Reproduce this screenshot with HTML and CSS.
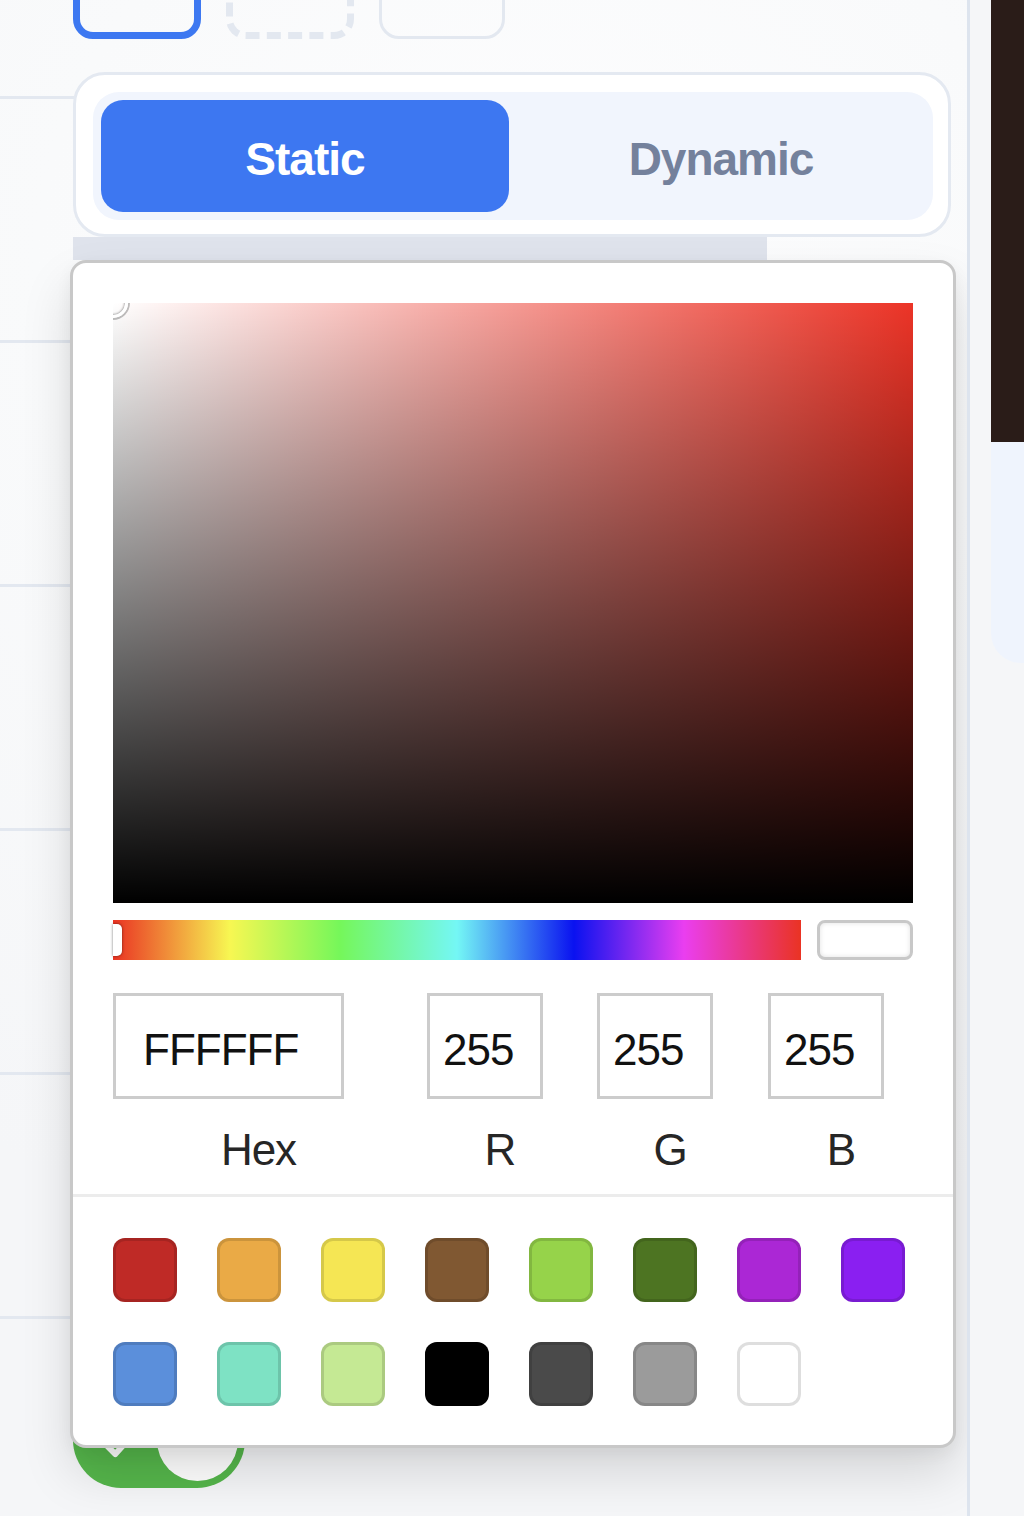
FILE: index.html
```html
<!DOCTYPE html>
<html lang="en">
<head>
<meta charset="utf-8">
<title>Color picker</title>
<link rel="stylesheet" href="styles.css">
</head>
<body>
<div class="app">
  <main class="main">
    <div class="list">
      <div class="row"></div>
      <div class="row"></div>
      <div class="row"></div>
      <div class="row"></div>
      <div class="row"></div>
      <div class="row">
        <div class="toggle">
          <svg class="toggle-check" width="44" height="44" viewBox="0 0 24 24"><path d="M5 12.5l5 5 9-10" fill="none" stroke="#fff" stroke-width="3.2" stroke-linecap="round" stroke-linejoin="round"/></svg>
          <span class="toggle-knob"></span>
        </div>
      </div>
    </div>

    <div class="panel">
      <div class="styles">
        <div class="style-box solid"></div>
        <div class="style-box dashed"></div>
        <div class="style-box plain"></div>
      </div>

      <div class="segment">
        <div class="segment-track">
          <div class="seg active">Static</div>
          <div class="seg">Dynamic</div>
        </div>
      </div>

      <div class="strip"></div>

      <div class="picker">
        <div class="picker-top">
          <div class="saturation">
            <span class="sat-handle"></span>
          </div>
          <div class="hue-row">
            <div class="hue"><span class="hue-handle"></span></div>
            <div class="preview"></div>
          </div>
          <div class="fields">
            <div class="field hex">
              <div class="field-input">FFFFFF</div>
              <div class="field-label">Hex</div>
            </div>
            <div class="field rgb r">
              <div class="field-input">255</div>
              <div class="field-label">R</div>
            </div>
            <div class="field rgb g">
              <div class="field-input">255</div>
              <div class="field-label">G</div>
            </div>
            <div class="field rgb b">
              <div class="field-input">255</div>
              <div class="field-label">B</div>
            </div>
          </div>
        </div>
        <div class="presets">
          <span class="swatch c-red"></span>
          <span class="swatch c-orange"></span>
          <span class="swatch c-yellow"></span>
          <span class="swatch c-brown"></span>
          <span class="swatch c-green"></span>
          <span class="swatch c-darkgreen"></span>
          <span class="swatch c-purple"></span>
          <span class="swatch c-violet"></span>
          <span class="swatch c-blue"></span>
          <span class="swatch c-teal"></span>
          <span class="swatch c-lime"></span>
          <span class="swatch c-black"></span>
          <span class="swatch c-dark"></span>
          <span class="swatch c-gray"></span>
          <span class="swatch c-white"></span>
        </div>
      </div>
    </div>
  </main>
  <aside class="side">
    <div class="side-dark"></div>
    <div class="side-card"></div>
  </aside>
</div>
</body>
</html>
```

FILE: styles.css
```css
* { box-sizing: border-box; }

html, body {
  margin: 0;
  padding: 0;
}

body {
  background: #f5f6f8;
  font-family: "Liberation Sans", Arial, sans-serif;
  width: 1024px;
  height: 1516px;
  overflow: hidden;
}

.app {
  display: flex;
  height: 1516px;
}

.main {
  position: relative;
  width: 970px;
  height: 1516px;
  border-right: 3px solid #dde4ee;
  background: radial-gradient(1100px 1000px at 55% 18%, #fdfdfe 0%, #f9fafb 45%, #f5f6f8 100%);
  overflow: hidden;
}

/* background list */
.list {
  padding-top: 96px;
}

.row {
  width: 80px;
  height: 244px;
  border-top: 3px solid #e3e8f0;
}

.toggle {
  display: flex;
  justify-content: space-between;
  width: 172px;
  height: 96px;
  margin: 73px 0 0 73px;
  padding: 0 7px 0 24px;
  border-radius: 48px;
  background: #55b64b;
}

.toggle-check {
  margin-top: 30px;
}

.toggle-knob {
  align-self: center;
  width: 81px;
  height: 81px;
  border-radius: 50%;
  background: #ffffff;
}

/* floating panel */
.panel {
  position: absolute;
  left: 70px;
  top: -41px;
  width: 886px;
  z-index: 2;
}

.styles {
  display: flex;
  gap: 25px;
  padding-left: 3px;
}

.style-box {
  width: 128px;
  height: 80px;
  border-radius: 20px;
}

.style-box.solid {
  border: 7px solid #3d78f1;
}

.style-box.dashed {
  border: 7px dashed #e3e8f0;
}

.style-box.plain {
  width: 126px;
  border: 3px solid #e3e8f0;
}

.segment {
  margin: 33px 0 0 3px;
  width: 878px;
  padding: 17px 15px 14px 17px;
  border: 3px solid #e4e9f1;
  border-radius: 32px;
  background: #ffffff;
}

.segment-track {
  display: flex;
  gap: 8px;
  padding: 8px;
  border-radius: 26px;
  background: #f1f5fd;
}

.seg {
  flex: 1;
  height: 112px;
  display: flex;
  align-items: center;
  justify-content: center;
  padding-top: 6px;
  border-radius: 22px;
  font-size: 46px;
  font-weight: 700;
  letter-spacing: -1px;
  color: #74819c;
}

.seg.active {
  background: #3d77f1;
  color: #ffffff;
}

.strip {
  margin-left: 3px;
  width: 694px;
  height: 23px;
  background: #dfe3ec;
}

/* color picker */
.picker {
  width: 886px;
  border: 3px solid #c8c8c8;
  border-radius: 16px;
  background: #ffffff;
  box-shadow: 0 26px 50px rgba(0, 0, 0, 0.13), 0 6px 16px rgba(0, 0, 0, 0.05);
  overflow: hidden;
}

.picker-top {
  padding: 40px 40px 20px;
}

.saturation {
  position: relative;
  height: 600px;
  overflow: hidden;
  background:
    linear-gradient(to top, #000000, rgba(0, 0, 0, 0)),
    linear-gradient(to right, #ffffff, rgba(255, 255, 255, 0)),
    #ec3427;
}

.sat-handle {
  position: absolute;
  left: -15px;
  top: -15px;
  width: 30px;
  height: 30px;
  border-radius: 50%;
  border: 3px solid #ffffff;
  box-shadow: 0 0 0 2px rgba(0, 0, 0, 0.25), inset 0 0 2px 1px rgba(0, 0, 0, 0.3);
}

.hue-row {
  display: flex;
  gap: 16px;
  margin-top: 17px;
  height: 40px;
}

.hue {
  position: relative;
  flex: 1;
  background: linear-gradient(to right,
    #ea3323 0%,
    #f7f752 17%,
    #75f75a 33%,
    #74f7f5 50%,
    #0a12f0 67%,
    #ea3ef0 83%,
    #ea3323 100%);
}

.hue-handle {
  position: absolute;
  left: 0;
  top: 4px;
  width: 9px;
  height: 32px;
  border-radius: 0 5px 5px 0;
  background: #ffffff;
  box-shadow: 0 0 3px rgba(0, 0, 0, 0.55);
}

.preview {
  width: 96px;
  border: 3px solid #c8c8c8;
  border-radius: 8px;
  background: #ffffff;
  box-shadow: inset 0 0 5px rgba(0, 0, 0, 0.12);
}

.fields {
  display: flex;
  margin-top: 33px;
}

.field {
  display: flex;
  flex-direction: column;
}

.field.hex { width: 231px; }
.field.rgb { width: 116px; }
.field.r { margin-left: 83px; }
.field.g { margin-left: 54px; }
.field.b { margin-left: 55px; }

.field-input {
  height: 106px;
  display: flex;
  align-items: center;
  padding-top: 8px;
  border: 3px solid #cccccc;
  font-size: 44px;
  letter-spacing: -1px;
  color: #111111;
}

.hex .field-input { padding-left: 27px; }
.rgb .field-input { padding-left: 13px; }

.field-label {
  margin-top: 27px;
  height: 48px;
  line-height: 48px;
  text-align: center;
  font-size: 44px;
  letter-spacing: -1px;
  color: #262626;
}

.hex .field-label { padding-left: 60px; }
.rgb .field-label { padding-left: 30px; }

.presets {
  display: grid;
  grid-template-columns: repeat(8, 64px);
  column-gap: 40px;
  row-gap: 40px;
  padding: 41px 40px 39px;
  border-top: 3px solid #ececec;
}

.swatch {
  width: 64px;
  height: 64px;
  border-radius: 12px;
  box-shadow: inset 0 0 0 3px rgba(0, 0, 0, 0.13);
}

.c-red { background: #bf2a26; }
.c-orange { background: #eaaa46; }
.c-yellow { background: #f5e654; }
.c-brown { background: #805832; }
.c-green { background: #96d34a; }
.c-darkgreen { background: #4d7422; }
.c-purple { background: #ab27d5; }
.c-violet { background: #8a1ff1; }
.c-blue { background: #5b8fdb; }
.c-teal { background: #7ee2c4; }
.c-lime { background: #c5e994; }
.c-black { background: #000000; }
.c-dark { background: #4a4a4a; }
.c-gray { background: #9b9b9b; }
.c-white { background: #ffffff; }

/* right side */
.side {
  width: 33px;
  margin-left: 21px;
  display: flex;
  flex-direction: column;
}

.side-dark {
  height: 442px;
  background: #2a1c18;
}

.side-card {
  height: 221px;
  background: #eff4fd;
  border-bottom-left-radius: 30px;
}
```
